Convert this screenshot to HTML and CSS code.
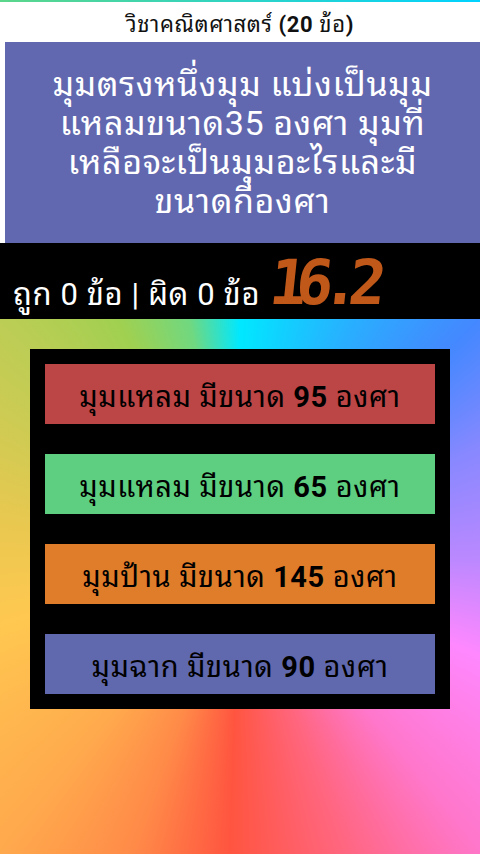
FILE: index.html
```html
<!DOCTYPE html>
<html lang="th">
<head>
<meta charset="utf-8">
<link rel="stylesheet" href="styles.css">
</head>
<body>
<div class="app">
  <div class="topline"></div>
  <div class="header"><span>วิชาคณิตศาสตร์ <b>(20</b> ข้อ<b>)</b></span></div>
  <div class="question"><span>มุมตรงหนึ่งมุม แบ่งเป็นมุม<br>แหลมขนาด35 องศา มุมที่<br>เหลือจะเป็นมุมอะไรและมี<br>ขนาดกี่องศา</span></div>
  <div class="status">
    <span class="score">ถูก 0 ข้อ | ผิด 0 ข้อ</span>
    <span class="timer">16.2</span>
  </div>
  <div class="arena">
    <div class="panel">
      <div class="opt red"><span>มุมแหลม มีขนาด <b>95</b> องศา</span></div>
      <div class="opt green"><span>มุมแหลม มีขนาด <b>65</b> องศา</span></div>
      <div class="opt orange"><span>มุมป้าน มีขนาด <b>145</b> องศา</span></div>
      <div class="opt blue"><span>มุมฉาก มีขนาด <b>90</b> องศา</span></div>
    </div>
  </div>
</div>
</body>
</html>
```
FILE: styles.css
```css
html, body {
  margin: 0;
  padding: 0;
  height: 100%;
}
body {
  font-family: Roboto, "Noto Sans Thai Looped", Loma, Waree, Garuda, "Noto Sans Thai", sans-serif;
  background: #fff;
}
.app {
  display: flex;
  flex-direction: column;
  height: 854px;
}
.topline {
  height: 2px;
  background: linear-gradient(90deg, #5cd68a, #00d2ff);
}
.header {
  height: 40px;
  display: flex;
  align-items: center;
  justify-content: center;
  font-size: 22px;
  letter-spacing: 0.6px;
  color: #111;
}
.question {
  margin-left: 5px;
  height: 201px;
  box-sizing: border-box;
  padding: 0 6px;
  background: #6168af;
  color: #fff;
  font-size: 34px;
  letter-spacing: 0.6px;
  line-height: 39px;
  text-align: center;
  display: flex;
  align-items: center;
  justify-content: center;
}
.status {
  height: 76px;
  background: #000;
  display: flex;
  align-items: flex-end;
  padding: 0 13px 4px;
  box-sizing: border-box;
  gap: 10px;
}
.score {
  color: #fff;
  font-size: 31px;
  letter-spacing: 0.6px;
  line-height: 40px;
}
.timer {
  color: #c0581a;
  font-family: "DejaVu Sans Mono", monospace;
  font-weight: bold;
  font-size: 62px;
  line-height: 64px;
  letter-spacing: -11px;
  transform: skewX(-6deg);
}
.arena {
  flex: 1;
  padding: 30px;
  background: conic-gradient(from 0deg at 240px 240px,
    #00e8ff 0deg, #28b0ff 25deg, #4488ff 45deg, #8888ff 65deg, #bb88ff 90deg,
    #ff88ff 112deg, #ff77cc 140deg, #ff6680 160deg, #ff5540 182deg,
    #ff8a48 200deg, #ffaa4d 220deg, #ffc850 255deg, #e8c850 280deg,
    #bccd55 315deg, #a0d050 333deg, #70d880 348deg, #00e8ff 360deg);
}
.panel {
  width: 420px;
  background: #000;
  padding: 15px;
  box-sizing: border-box;
  display: flex;
  flex-direction: column;
  gap: 30px;
}
.opt {
  height: 60px;
  display: flex;
  align-items: center;
  justify-content: center;
  font-size: 29px;
  letter-spacing: 0.6px;
  color: #000;
}
.red { background: #bc4545; }
.green { background: #5ecf80; }
.orange { background: #e07d2a; }
.blue { background: #6068ae; }
```
